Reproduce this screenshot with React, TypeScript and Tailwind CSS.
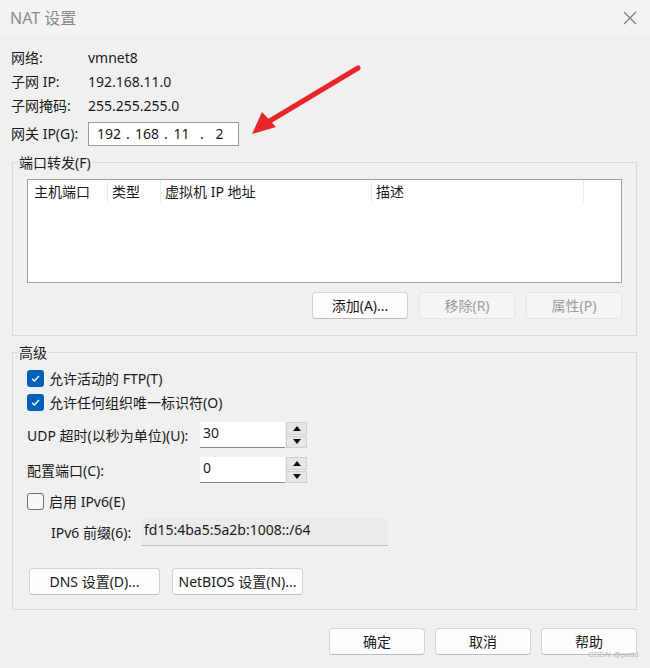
import React from 'react';

const font = { fontFamily: '"Noto Sans", "Noto Sans CJK SC", sans-serif' };

function Btn({ label, w = 'w-[96px]', disabled = false }: { label: string; w?: string; disabled?: boolean }) {
  return (
    <div
      className={`${w} h-[27px] flex items-center justify-center rounded-[4px] border text-[14px] ${
        disabled
          ? 'bg-[#f5f5f5] border-[#e5e5e5] text-[#9d9d9d]'
          : 'bg-[#fdfdfd] border-[#d3d3d3] border-b-[#bdbdbd] text-[#1a1a1a]'
      }`}
    >
      {label}
    </div>
  );
}

function Check({ checked, label }: { checked: boolean; label: string }) {
  return (
    <div className="flex items-center h-[24px]">
      {checked ? (
        <div className="w-[17px] h-[17px] rounded-[3px] bg-[#005fb8] flex items-center justify-center">
          <svg width="11" height="11" viewBox="0 0 11 11">
            <path d="M2 5.8 L4.4 8 L9 3" fill="none" stroke="white" strokeWidth="1.3" />
          </svg>
        </div>
      ) : (
        <div className="w-[17px] h-[17px] rounded-[3px] border border-[#6e6e6e] bg-[#f7f7f7]" />
      )}
      <span className="ml-[5px] text-[14px] text-[#1a1a1a]">{label}</span>
    </div>
  );
}

function Spin({ value }: { value: string }) {
  return (
    <div className="flex h-[26px]">
      <div className="w-[85px] h-[26px] bg-white border-b border-[#8a8a8a] pl-[3px] text-[14px] leading-[22px]">
        {value}
      </div>
      <div className="w-[22px] flex flex-col gap-[1px] pl-[1px]">
        <div className="flex-1 bg-[#e6e6e6] border border-[#d0d0d0] flex items-center justify-center">
          <svg width="8" height="5" viewBox="0 0 8 5"><path d="M0 5 L4 0 L8 5Z" fill="#111" /></svg>
        </div>
        <div className="flex-1 bg-[#e6e6e6] border border-[#d0d0d0] flex items-center justify-center">
          <svg width="8" height="5" viewBox="0 0 8 5"><path d="M0 0 L4 5 L8 0Z" fill="#111" /></svg>
        </div>
      </div>
    </div>
  );
}

export default function App() {
  return (
    <div className="relative w-[650px] h-[668px] bg-[#f0f0f0] text-[#1a1a1a] overflow-hidden" style={font}>
      <div className="h-[35px] bg-[#f3f3f3] flex items-center justify-between pl-[10px] pr-[13px]">
        <span className="text-[16px] text-[#8a8a8a]">NAT 设置</span>
        <svg width="14" height="14" viewBox="0 0 14 14">
          <path d="M1 1 L13 13 M13 1 L1 13" stroke="#7a7a7a" strokeWidth="1.2" />
        </svg>
      </div>

      <div className="pl-[11px] pr-[13px] pt-[10px]">
        <div className="flex items-center h-[24px] text-[14px]">
          <span className="w-[77px]">网络:</span>
          <span>vmnet8</span>
        </div>
        <div className="flex items-center h-[24px] text-[14px]">
          <span className="w-[77px]">子网 IP:</span>
          <span>192.168.11.0</span>
        </div>
        <div className="flex items-center h-[24px] text-[14px]">
          <span className="w-[77px]">子网掩码:</span>
          <span>255.255.255.0</span>
        </div>
        <div className="flex items-center h-[25px] mt-[4px] text-[14px]">
          <span className="w-[77px]">网关 IP(G):</span>
          <div className="w-[151px] h-[24px] bg-white border border-[#9a9a9a] flex items-center text-[14px] pl-[8px]">
            <span className="w-[24px]">192</span>
            <span className="w-[14px] text-center">.</span>
            <span className="w-[24px]">168</span>
            <span className="w-[14px] text-center">.</span>
            <span className="w-[17px] text-center">11</span>
            <span className="w-[24px] text-center">.</span>
            <span className="w-[11px] text-center">2</span>
          </div>
        </div>

        <div className="relative mt-[16px] ml-[1px] h-[174px] border border-[#dadada] pl-[14px] pt-[16px]">
          <span className="absolute -top-[11px] left-[5px] px-[1px] bg-[#f0f0f0] text-[14px]">端口转发(F)</span>
          <div className="w-[595px] h-[104px] bg-white border border-[#a0a0a0]">
            <div className="flex h-[22px] text-[14px] items-center">
              <div className="w-[80px] pl-[6px] border-r border-[#ebebeb] h-full flex items-center">主机端口</div>
              <div className="w-[53px] pl-[4px] border-r border-[#ebebeb] h-full flex items-center">类型</div>
              <div className="w-[211px] pl-[4px] border-r border-[#ebebeb] h-full flex items-center">虚拟机 IP 地址</div>
              <div className="w-[212px] pl-[4px] border-r border-[#ebebeb] h-full flex items-center">描述</div>
            </div>
          </div>
          <div className="flex justify-end gap-[11px] w-[595px] mt-[9px]">
            <Btn label="添加(A)..." />
            <Btn label="移除(R)" disabled />
            <Btn label="属性(P)" disabled />
          </div>
        </div>

        <div className="relative mt-[16px] ml-[1px] h-[258px] border border-[#dadada] pl-[14px] pt-[13px]">
          <span className="absolute -top-[11px] left-[5px] px-[1px] bg-[#f0f0f0] text-[14px]">高级</span>
          <Check checked label="允许活动的 FTP(T)" />
          <Check checked label="允许任何组织唯一标识符(O)" />
          <div className="flex items-center mt-[8px] h-[26px]">
            <span className="w-[173px] text-[14px]">UDP 超时(以秒为单位)(U):</span>
            <Spin value="30" />
          </div>
          <div className="flex items-center mt-[9px] h-[26px]">
            <span className="w-[173px] text-[14px]">配置端口(C):</span>
            <Spin value="0" />
          </div>
          <div className="mt-[6px]">
            <Check checked={false} label="启用 IPv6(E)" />
          </div>
          <div className="flex items-center mt-[5px] h-[28px]">
            <span className="w-[115px] pl-[24px] text-[14px]">IPv6 前缀(6):</span>
            <div className="w-[246px] h-[28px] bg-[#ebebeb] border-b border-[#bdbdbd] pl-[2px] text-[14px] leading-[24px]">
              fd15:4ba5:5a2b:1008::/64
            </div>
          </div>
          <div className="flex gap-[12px] mt-[22px] ml-[2px]">
            <Btn label="DNS 设置(D)..." w="w-[131px]" />
            <Btn label="NetBIOS 设置(N)..." w="w-[131px]" />
          </div>
        </div>

        <div className="flex justify-end gap-[10px] mt-[18px]">
          <Btn label="确定" />
          <Btn label="取消" />
          <Btn label="帮助" />
        </div>
      </div>

      <span className="absolute left-[588px] top-[649px] text-[8px] text-[#b5b5b5]" style={{ fontFamily: '"Liberation Sans", sans-serif' }}>
        CSDN @pcdd
      </span>

      <svg className="absolute left-0 top-0 pointer-events-none" width="650" height="668">
        <path d="M358 68 L268 122" stroke="#e8262a" strokeWidth="5" strokeLinecap="round" />
        <path d="M252 134 L262 112 L276 127 Z" fill="#e8262a" />
      </svg>
    </div>
  );
}
